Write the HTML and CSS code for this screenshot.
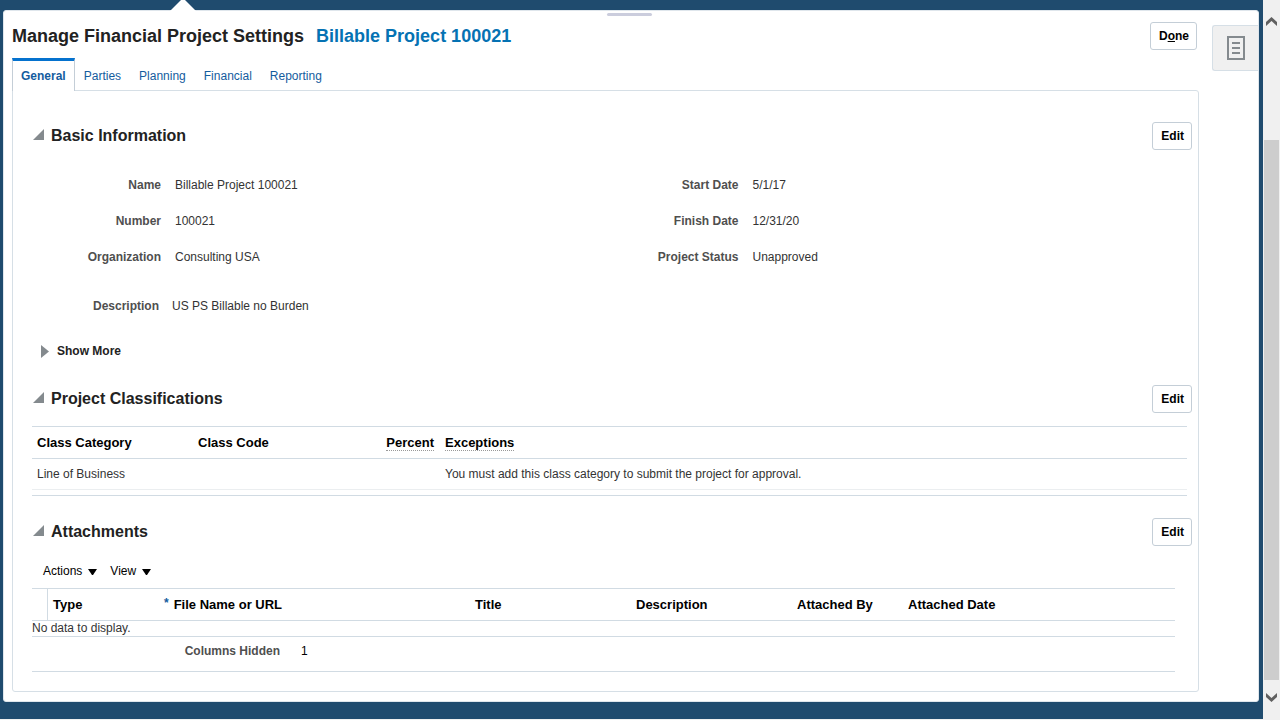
FILE: index.html
```html
<!DOCTYPE html>
<html lang="en">
<head>
<meta charset="utf-8">
<title>Manage Financial Project Settings</title>
<link rel="stylesheet" href="styles.css">
</head>
<body>
<div class="app">
  <div class="panel">
    <svg class="notch" width="26" height="14" viewBox="0 0 26 14" aria-hidden="true"><path d="M0 14V12L11 1H15L26 12V14Z" fill="#fff"/></svg>
    <span class="grip"></span>
    <main class="main">
      <header class="page-head">
        <h1 class="page-title">Manage Financial Project Settings <span class="project-name">Billable Project 100021</span></h1>
        <button class="btn" type="button">D<u>o</u>ne</button>
      </header>
      <nav class="tabs">
        <a class="tab tab-active" href="#general" aria-current="page">General</a>
        <a class="tab" href="#parties">Parties</a>
        <a class="tab" href="#planning">Planning</a>
        <a class="tab" href="#financial">Financial</a>
        <a class="tab" href="#reporting">Reporting</a>
      </nav>
      <div class="content" id="general">
        <section class="section">
          <div class="section-head">
            <h2 class="section-title"><svg width="11" height="11" viewBox="0 0 11 11" aria-hidden="true"><path d="M0 11L11 0V11Z" fill="#848a8e"/></svg>Basic Information</h2>
            <button class="btn" type="button">Edit</button>
          </div>
          <div class="columns">
            <dl class="fields">
              <div class="field"><dt>Name</dt><dd>Billable Project 100021</dd></div>
              <div class="field"><dt>Number</dt><dd>100021</dd></div>
              <div class="field"><dt>Organization</dt><dd>Consulting USA</dd></div>
            </dl>
            <dl class="fields">
              <div class="field"><dt>Start Date</dt><dd>5/1/17</dd></div>
              <div class="field"><dt>Finish Date</dt><dd>12/31/20</dd></div>
              <div class="field"><dt>Project Status</dt><dd>Unapproved</dd></div>
            </dl>
          </div>
          <dl class="fields description">
            <div class="field"><dt>Description</dt><dd>US PS Billable no Burden</dd></div>
          </dl>
          <button class="show-more" type="button"><svg width="8" height="13" viewBox="0 0 8 13" aria-hidden="true"><path d="M0 0L8 6.500L0 13Z" fill="#848a8e"/></svg>Show More</button>
        </section>

        <section class="section">
          <div class="section-head">
            <h2 class="section-title"><svg width="11" height="11" viewBox="0 0 11 11" aria-hidden="true"><path d="M0 11L11 0V11Z" fill="#848a8e"/></svg>Project Classifications</h2>
            <button class="btn" type="button">Edit</button>
          </div>
          <div class="class-box">
            <table class="grid">
              <colgroup><col class="w-161"><col class="w-161"><col class="w-86"><col></colgroup>
              <thead>
                <tr><th>Class Category</th><th>Class Code</th><th class="right"><span class="hint">Percent</span></th><th><span class="hint">Exceptions</span></th></tr>
              </thead>
              <tbody>
                <tr><td>Line of Business</td><td></td><td></td><td>You must add this class category to submit the project for approval.</td></tr>
              </tbody>
            </table>
          </div>
        </section>

        <section class="section">
          <div class="section-head">
            <h2 class="section-title"><svg width="11" height="11" viewBox="0 0 11 11" aria-hidden="true"><path d="M0 11L11 0V11Z" fill="#848a8e"/></svg>Attachments</h2>
            <button class="btn" type="button">Edit</button>
          </div>
          <div class="menus">
            <button class="menu" type="button">Actions<svg width="9" height="6" viewBox="0 0 9 6" aria-hidden="true"><path d="M0 0H9L5 6H4Z"/></svg></button>
            <button class="menu" type="button">View<svg width="9" height="6" viewBox="0 0 9 6" aria-hidden="true"><path d="M0 0H9L5 6H4Z"/></svg></button>
          </div>
          <div class="attach-box">
            <table class="grid">
              <colgroup><col class="w-16"><col class="w-111"><col class="w-311"><col class="w-161"><col class="w-161"><col class="w-111"><col></colgroup>
              <thead>
                <tr><th class="row-head"></th><th>Type</th><th><span class="required"><span class="star">*</span>File Name or URL</span></th><th>Title</th><th>Description</th><th>Attached By</th><th>Attached Date</th></tr>
              </thead>
            </table>
            <p class="empty">No data to display.</p>
            <div class="status"><span class="status-label">Columns Hidden</span><span>1</span></div>
          </div>
        </section>
      </div>
    </main>
    <aside class="rail">
      <button class="rail-btn" type="button" aria-label="Project details"><svg width="18" height="24" viewBox="0 0 18 24" fill="none" stroke="#848a8e" stroke-width="2" aria-hidden="true"><path d="M1 1H17V23H1ZM5 7H13M5 12H13M5 17H13"/></svg></button>
    </aside>
  </div>
</div>
<div class="scrollbar" aria-hidden="true">
  <svg class="arrow-up" width="11" height="9" viewBox="0 0 11 9"><path d="M0 5L5.500 0L11 5V9L5.500 4L0 9Z" fill="#606060"/></svg>
  <span class="thumb"></span>
  <svg class="arrow-down" width="11" height="9" viewBox="0 0 11 9"><path d="M0 4L5.500 9L11 4V0L5.500 5L0 0Z" fill="#606060"/></svg>
</div>
</body>
</html>
```

FILE: styles.css
```css
* { box-sizing: border-box; }

body {
  margin: 0;
  display: flex;
  min-height: 100vh;
  background: #1f4b6e;
  color: #333;
  font: 12px/16px "Liberation Sans", Arial, sans-serif;
}

h1, h2, p, dl, dd { margin: 0; }

button {
  font: inherit;
  color: #000;
  cursor: pointer;
}

.app {
  flex: 1;
  min-width: 0;
  padding: 10px 4px 17px 3px;
  border-bottom: 1px solid #f0f0f0;
}

.panel {
  position: relative;
  display: flex;
  height: 100%;
  padding-bottom: 9px;
  background: #fff;
  border: 1px solid #dfe6ec;
  border-radius: 3px;
}

.notch {
  position: absolute;
  top: -12px;
  left: 166px;
}

.grip {
  position: absolute;
  top: 2px;
  left: 50%;
  width: 45px;
  height: 3px;
  margin-left: -24px;
  border-radius: 2px;
  background: #cbcddd;
}

.main {
  flex: 1;
  min-width: 0;
  display: flex;
  flex-direction: column;
  padding: 11px 13px 0 8px;
}

.page-head {
  display: flex;
  justify-content: space-between;
  align-items: center;
  padding-right: 2px;
}

.page-title {
  font-size: 18px;
  line-height: 28px;
  color: #222;
}

.project-name {
  margin-left: 7px;
  color: #0572b3;
}

.btn {
  height: 28px;
  padding: 0 7px 0 8px;
  font-weight: bold;
  background: #fff;
  border: 1px solid #c4ced7;
  border-radius: 3px;
}

.tabs {
  position: relative;
  display: flex;
  align-items: flex-end;
  margin: 8px 0 -1px;
}

.tab {
  margin-left: 18px;
  padding: 7px 0;
  color: #145c9e;
  text-decoration: none;
}

.tab-active {
  margin: 0 -9px 0 0;
  padding: 7px 8px;
  font-weight: bold;
  background: #fff;
  border: 1px solid #c4ced7;
  border-top: 3px solid #0572ce;
  border-bottom: 0;
}

.content {
  flex: 1;
  padding: 31px 6px 19px 19px;
  border: 1px solid #d6dfe6;
  border-radius: 0 3px 3px 3px;
}

.section + .section { margin-top: 22px; }

.section-head {
  display: flex;
  justify-content: space-between;
  align-items: center;
}

.section-title {
  display: flex;
  align-items: center;
  gap: 7px;
  margin-left: 1px;
  font-size: 16px;
  line-height: 20px;
  color: #222;
}

.section-title svg { margin-bottom: 3px; }

.columns {
  display: grid;
  grid-template-columns: 1fr 1fr;
  margin: 17px 5px 0 0;
}

.field {
  display: grid;
  grid-template-columns: 129px 1fr;
  column-gap: 14px;
  line-height: 36px;
}

.field dt {
  text-align: right;
  font-weight: bold;
  color: #4f4f4f;
}

.description { margin-top: 13px; }

.description .field {
  grid-template-columns: 127px 1fr;
  column-gap: 13px;
}

.show-more {
  display: flex;
  align-items: center;
  gap: 8px;
  margin: 19px 0 0 9px;
  padding: 0;
  font-weight: bold;
  color: #222;
  background: none;
  border: 0;
}

.section:first-child { padding-bottom: 4px; }

.grid {
  width: 100%;
  table-layout: fixed;
  border-collapse: separate;
  border-spacing: 0;
}

.grid th {
  height: 32px;
  padding: 0 5px;
  text-align: left;
  font-size: 13px;
  color: #000;
  border-bottom: 1px solid #d1dbe3;
}

.grid td {
  height: 31px;
  padding: 0 5px;
  border-bottom: 1px solid #ebeef0;
}

.grid .right {
  padding-right: 6px;
  text-align: right;
}

.grid .row-head { border-right: 1px solid #d1dbe3; }

.w-16 { width: 16px; }
.w-86 { width: 86px; }
.w-111 { width: 111px; }
.w-161 { width: 161px; }
.w-311 { width: 311px; }

.hint { border-bottom: 1px dotted #999; }

.required {
  display: flex;
  gap: 5px;
}

.star {
  color: #145c9e;
  font-size: 12px;
  line-height: 12px;
}

.class-box {
  margin: 13px 5px 0 0;
  padding-bottom: 5px;
  border-top: 1px solid #d1dbe3;
  border-bottom: 1px solid #d1dbe3;
}

.menus {
  display: flex;
  gap: 13px;
  margin: 17px 0 0 11px;
}

.menu {
  display: flex;
  align-items: center;
  gap: 6px;
  padding: 0;
  background: none;
  border: 0;
}

.menu svg { margin-top: 2px; }

.attach-box {
  margin: 9px 17px 0 0;
  border-top: 1px solid #d1dbe3;
  border-bottom: 1px solid #d1dbe3;
}

.empty {
  line-height: 15px;
  border-bottom: 1px solid #d1dbe3;
}

.status {
  display: flex;
  gap: 21px;
  padding: 6px 0 12px;
  color: #000;
}

.status-label {
  width: 248px;
  text-align: right;
  font-weight: bold;
  color: #4f4f4f;
}

.rail {
  width: 46px;
  padding-top: 14px;
}

.rail-btn {
  display: flex;
  align-items: center;
  justify-content: center;
  width: 100%;
  height: 46px;
  padding: 0;
  background: #f0f0f0;
  border: 1px solid #d6dfe6;
  border-right: 0;
  border-radius: 3px 0 0 3px;
}

.scrollbar {
  display: grid;
  grid-template-rows: 36px 104fr 540fr 40px;
  width: 17px;
  padding: 0 1px;
  background: #f0f0f0;
}

.thumb {
  grid-row: 3;
  background: #cdcdcd;
}

.arrow-up {
  grid-row: 1;
  margin: 17px 0 0 2px;
}

.arrow-down {
  grid-row: 4;
  margin: 13px 0 0 2px;
}
```
